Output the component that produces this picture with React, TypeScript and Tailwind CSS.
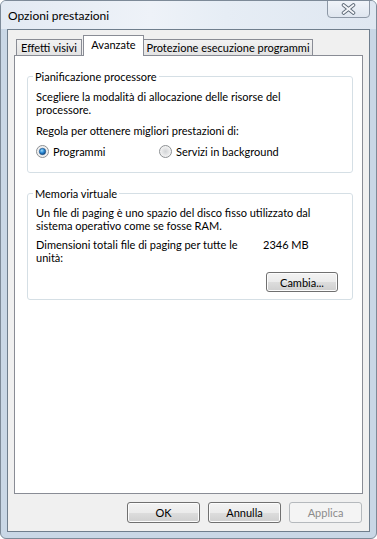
import React from "react";

function Radio({ checked }: { checked?: boolean }) {
  return (
    <svg width="13" height="13" viewBox="0 0 13 13" className="shrink-0">
      <defs>
        <radialGradient id={checked ? "rg-on-bg" : "rg-off-bg"} cx="0.5" cy="0.5" r="0.5">
          <stop offset="0" stopColor="#d2d4d6" />
          <stop offset="1" stopColor="#f7f7f7" />
        </radialGradient>
        <radialGradient id="rg-dot" cx="0.4" cy="0.35" r="0.7">
          <stop offset="0" stopColor="#9fdcfb" />
          <stop offset="0.5" stopColor="#2b8ad6" />
          <stop offset="1" stopColor="#0c3d76" />
        </radialGradient>
      </defs>
      <circle cx="6.5" cy="6.5" r="6" fill={`url(#${checked ? "rg-on-bg" : "rg-off-bg"})`} stroke="#8c8f92" />
      {checked && <circle cx="6.5" cy="6.5" r="3.2" fill="url(#rg-dot)" stroke="#1c4f84" strokeWidth="0.6" />}
    </svg>
  );
}

function Button({ label, disabled }: { label: string; disabled?: boolean }) {
  return (
    <button
      className={
        disabled
          ? "w-[73px] h-[21px] rounded-[3px] border border-[#b5b9bd] bg-[#f4f4f4] text-[#8b8b8b] text-[11px] leading-none"
          : "w-[73px] h-[21px] rounded-[3px] border border-[#707070] bg-[linear-gradient(#f3f3f3_0%,#ebebeb_50%,#dddddd_51%,#cfcfcf_100%)] text-black text-[11px] leading-none shadow-[inset_0_0_0_1px_#fcfcfc]"
      }
    >
      {label}
    </button>
  );
}

export default function App() {
  return (
    <div className="w-[377px] h-[539px] flex flex-col bg-[#c9d7e6] border border-[#7d8a98] rounded-t-[6px] rounded-b-[6px] font-['Lato','Noto_Sans',sans-serif] text-[11px] leading-[13px] text-black overflow-hidden">
      {/* title bar */}
      <div className="relative h-[28px] shrink-0 bg-[linear-gradient(90deg,#e3eaf3_0%,#eef2f8_40%,#e6edf5_60%,#dfe7f1_100%)] flex items-center pl-[7px]">
        <span className="text-[12px] text-black pt-[1px]">Opzioni prestazioni</span>
        <div className="absolute top-[-1px] right-[6px] w-[43px] h-[18px] rounded-b-[4px] border border-[#8d98a6] bg-[linear-gradient(#f0f4f9,#dfe6ef)] flex items-center justify-center">
          <svg width="15" height="12" viewBox="0 0 15 12">
            <path d="M2.5 2 L12.5 10 M12.5 2 L2.5 10" stroke="#5f6b78" strokeWidth="3.6" strokeLinecap="round" />
            <path d="M2.5 2 L12.5 10 M12.5 2 L2.5 10" stroke="#f4f6f9" strokeWidth="1.8" strokeLinecap="round" />
          </svg>
        </div>
      </div>

      {/* client area */}
      <div className="flex-1 mx-[6px] mb-[6px] border border-[#6f7e8d] bg-[#f0f0f0] flex flex-col pt-[5px] px-[6px] pb-[8px]">
        {/* tabs */}
        <div className="h-[20px] flex items-end pl-[2px] shrink-0 whitespace-nowrap">
          <div className="w-[66px] h-[16px] border border-b-0 border-[#898c95] bg-[linear-gradient(#f2f2f2,#e3e3e3)] flex items-center justify-center">
            Effetti visivi
          </div>
          <div className="relative z-10 -mb-px ml-px w-[61px] h-[21px] border border-b-0 border-[#898c95] bg-white flex items-start pt-[2px] justify-center">
            Avanzate
          </div>
          <div className="w-[169px] h-[16px] border border-b-0 border-l-0 border-[#898c95] bg-[linear-gradient(#f2f2f2,#e3e3e3)] flex items-center justify-center">
            Protezione esecuzione programmi
          </div>
        </div>

        {/* panel */}
        <div className="h-[439px] border border-[#898c95] bg-white pl-[12px] pr-[9px]">
          <fieldset className="mt-[14px] border border-[#d5dfe5] rounded-[3px] px-[8px] pt-[7px] pb-[14px]">
            <legend className="-ml-[3px] px-[2px] leading-[13px]">Pianificazione processore</legend>
            <p>
              Scegliere la modalità di allocazione delle risorse del
              <br />
              processore.
            </p>
            <p className="mt-[8px]">Regola per ottenere migliori prestazioni di:</p>
            <div className="mt-[8px] flex items-center h-[13px]">
              <label className="w-[123px] flex items-center gap-[4px]">
                <Radio checked />
                <span>Programmi</span>
              </label>
              <label className="flex items-center gap-[4px]">
                <Radio />
                <span>Servizi in background</span>
              </label>
            </div>
          </fieldset>

          <fieldset className="mt-[14px] border border-[#d5dfe5] rounded-[3px] px-[8px] pt-[6px] pb-[7px]">
            <legend className="-ml-[3px] px-[2px] leading-[13px]">Memoria virtuale</legend>
            <p>
              Un file di paging è uno spazio del disco fisso utilizzato dal
              <br />
              sistema operativo come se fosse RAM.
            </p>
            <div className="mt-[6px] flex">
              <p className="w-[227px]">
                Dimensioni totali file di paging per tutte le
                <br />
                unità:
              </p>
              <p>2346 MB</p>
            </div>
            <div className="mt-[8px] flex justify-end pr-[6px]">
              <button className="w-[72px] h-[20px] rounded-[3px] border border-[#707070] bg-[linear-gradient(#f3f3f3_0%,#ebebeb_50%,#dddddd_51%,#cfcfcf_100%)] shadow-[inset_0_0_0_1px_#fcfcfc] text-[11px] leading-none">
                Cambia...
              </button>
            </div>
          </fieldset>
        </div>

        {/* dialog buttons */}
        <div className="mt-[8px] flex justify-end gap-[8px] pr-px">
          <Button label="OK" />
          <Button label="Annulla" />
          <Button label="Applica" disabled />
        </div>
      </div>
    </div>
  );
}
